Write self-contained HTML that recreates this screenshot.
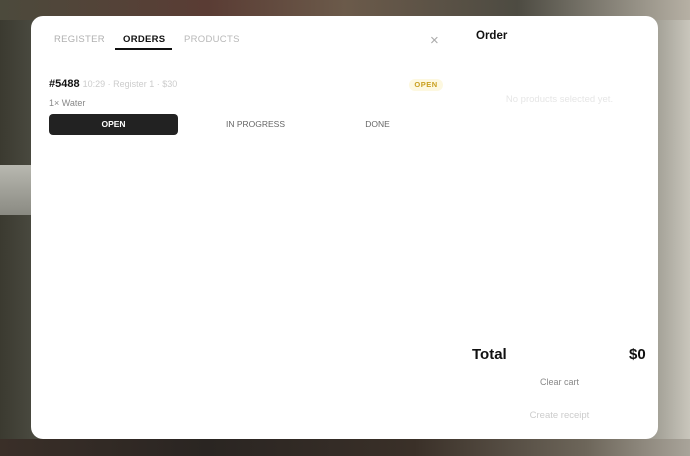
<!DOCTYPE html>
<html><head><meta charset="utf-8"><style>
*{margin:0;padding:0;box-sizing:border-box}
body{width:690px;height:456px;overflow:hidden;position:relative;font-family:"Liberation Sans",sans-serif;
background:linear-gradient(90deg,#3b3a30 0%,#4a4a40 5%,#3a3a34 40%,#4b463c 70%,#8a887e 92%,#c9c6bc 100%);}
.bgtop{position:absolute;left:0;top:0;width:690px;height:20px;background:linear-gradient(90deg,#4c4a3c,#5a3c34 30%,#6b5a4a 50%,#4d4b42 75%,#b6b0a4 100%)}
.bgl{position:absolute;left:0;top:165px;width:31px;height:50px;background:linear-gradient(#b8b8b0,#8a8a82)}
.bgbot{position:absolute;left:0;top:439px;width:690px;height:17px;background:linear-gradient(90deg,#3a2f28,#2a2522 30%,#3a3028 60%,#6d665a 85%,#a9a49a)}
.card{position:absolute;left:31px;top:16px;width:627px;height:423px;background:#fff;border-radius:12px}
.a{position:absolute;white-space:nowrap}
.tab{font-size:9.5px;letter-spacing:.3px;top:18px}
</style></head><body>
<div class="bgtop"></div><div class="bgl"></div><div class="bgbot"></div>
<div class="card">
 <div class="a tab" style="left:23px;color:#b0b0b0">REGISTER</div>
 <div class="a tab" style="left:92px;color:#111;font-weight:bold">ORDERS</div>
 <div style="position:absolute;left:84px;top:32px;width:57px;height:2px;background:#111"></div>
 <div class="a tab" style="left:153px;color:#b8b8b8">PRODUCTS</div>
 <div class="a" style="left:399px;top:16px;font-size:15px;color:#aaa">×</div>
 <div class="a" style="left:445px;top:14px;font-size:11.5px;font-weight:bold;color:#111">Order</div>
 <div class="a" style="left:18px;top:62px;font-size:11px;font-weight:bold;color:#111">#5488 <span style="font-weight:normal;font-size:9px;color:#ccc">10:29 · Register 1 · $30</span></div>
 <div class="a" style="left:378px;top:63px;width:34px;height:12px;border-radius:6px;background:#fdf8e0;color:#c9a020;font-size:7.5px;font-weight:bold;text-align:center;line-height:12px;letter-spacing:.5px">OPEN</div>
 <div class="a" style="left:18px;top:82px;font-size:9px;color:#888">1× Water</div>
 <div class="a" style="left:18px;top:98px;width:129px;height:21px;border-radius:4px;background:#222;color:#fff;font-size:8.5px;font-weight:bold;text-align:center;line-height:21px">OPEN</div>
 <div class="a" style="left:160px;top:98px;width:129px;height:21px;color:#666;font-size:8.5px;text-align:center;line-height:21px">IN PROGRESS</div>
 <div class="a" style="left:282px;top:98px;width:129px;height:21px;color:#666;font-size:8.5px;text-align:center;line-height:21px">DONE</div>
 <div class="a" style="left:441px;top:78px;width:175px;text-align:center;font-size:9.5px;color:#e6e6e6">No products selected yet.</div>
 <div class="a" style="left:441px;top:330px;font-size:15px;font-weight:bold;color:#111">Total</div>
 <div class="a" style="left:598px;top:330px;font-size:15px;font-weight:bold;color:#111">$0</div>
 <div class="a" style="left:441px;top:361px;width:175px;text-align:center;font-size:9px;color:#888">Clear cart</div>
 <div class="a" style="left:441px;top:394px;width:175px;text-align:center;font-size:9.5px;color:#ccc">Create receipt</div>
</div>
</body></html>
